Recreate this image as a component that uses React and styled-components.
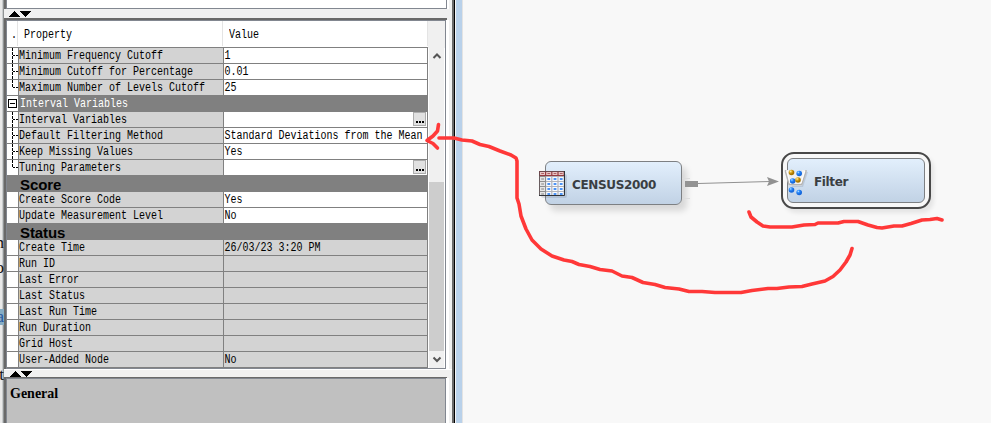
import React from "react";
import styled, { createGlobalStyle } from "styled-components";

const GlobalStyle = createGlobalStyle`
  * { box-sizing: border-box; }
  html, body { margin: 0; overflow: hidden; background: #f8f8f8; }
`;

const Screen = styled.div`
  position: relative;
  display: flex;
  width: 991px;
  height: 423px;
  overflow: hidden;
  background: #f8f8f8;
`;

const DocumentEdge = styled.div`
  position: relative;
  flex: none;
  width: 4px;
  height: 423px;
  overflow: hidden;
  background: linear-gradient(90deg, #e9e9e9 0 2px, #c9cccd 2px 3px, #909394 3px);
`;

const Fragment = styled.span`
  position: absolute;
  right: 0;
  top: ${(p) => p.$top}px;
  height: 16px;
  font: 17px/16px "Liberation Serif", serif;
  color: ${(p) => p.$color || "#111"};
  background: ${(p) => p.$bg || "transparent"};
`;

const Sidebar = styled.div`
  flex: none;
  width: 448px;
  height: 423px;
  display: flex;
  flex-direction: column;
  background: #696969;
`;

const PreviousPanel = styled.div`
  height: 9px;
  border: solid #828790;
  border-width: 0 1px 1px;
  width: 441px;
  background: #fff;
`;

const Strip = styled.div`
  display: flex;
  width: 448px;
  background: #f0f0f0;
`;

const Splitter = styled.div`
  flex: none;
  height: ${(p) => p.$height}px;
  padding: ${(p) => p.$pad};
  background: #f0f0f0;
  border-top: ${(p) => (p.$line ? "1px solid #fff" : "0")};
  svg { display: block; }
`;

const DarkLine = styled.div`
  flex: none;
  width: 443px;
  height: ${(p) => p.$height}px;
  background: #696969;
`;

const PanelRow = styled.div`
  flex: none;
  display: flex;
  height: ${(p) => p.$height}px;
  padding-left: 2px;
  background: linear-gradient(90deg, #696969 0 2px, #fff 2px 445px, #f0f0f0 445px);
`;

const Inspector = styled.div`
  display: flex;
  width: 440px;
  height: 349px;
  border: 1px solid #828790;
  background: #fff;
`;

const Table = styled.div`
  width: 421px;
`;

const Header = styled.div`
  display: grid;
  grid-template-columns: 11px 205px 205px;
  height: 27px;
  border-bottom: 1px solid #808080;
`;

const HeaderCell = styled.div`
  height: 25px;
  padding: 8px 0 0 ${(p) => p.$pad}px;
  border-right: 1px solid #e4e4e4;
`;

const Label = styled.span`
  display: block;
  width: max-content;
  height: 12px;
  font: 10px/12px "Liberation Mono", monospace;
  color: ${(p) => p.$color || "#000"};
  white-space: pre;
  transform: scaleY(1.25);
`;

const Row = styled.div`
  display: grid;
  grid-template-columns: 12px 205px 204px;
  height: 16px;
`;

const Tree = styled.div`
  height: 16px;
  border-right: 1px solid #808080;
  border-bottom: 1px solid #808080;
  background: #fff;
  svg { display: block; }
`;

const Cell = styled.div`
  display: flex;
  justify-content: space-between;
  height: 16px;
  padding: 0 0 0 ${(p) => p.$pad || 0}px;
  border-right: 1px solid #808080;
  border-bottom: 1px solid #808080;
  background: ${(p) => (p.$grey ? "#d3d3d3" : "#fff")};
  ${Label} { margin-top: 2px; }
`;

const SectionRow = styled.div`
  display: flex;
  height: 16px;
  background: #808080;
`;

const SectionTree = styled.div`
  width: 12px;
  height: 16px;
  background: ${(p) => (p.$open ? "#fff" : "#808080")};
  border: solid #808080;
  border-width: 0 1px 1px 0;
  svg { display: block; }
`;

const SectionTitle = styled.div`
  padding: 2px 0 0 1px;
`;

const Heading = styled.div`
  padding-left: 1px;
  font: bold 15px/18px "Liberation Sans", Arial, sans-serif;
  letter-spacing: -0.1px;
  color: #000;
`;

const MoreButton = styled.div`
  flex: none;
  display: flex;
  justify-content: center;
  align-items: flex-end;
  gap: 1px;
  width: 13px;
  height: 14px;
  margin: 0 1px 0 0;
  padding-bottom: 2px;
  border: 1px solid #adadad;
  background: #e1e1e1;
`;

const Dot = styled.i`
  width: 2px;
  height: 2px;
  background: #000;
`;

const Scrollbar = styled.div`
  display: flex;
  flex-direction: column;
  width: 17px;
  height: 347px;
  background: #f0f0f0;
  border: solid #fff;
  border-width: 0 1px;
  svg { display: block; flex: none; }
`;

const ScrollbarHeader = styled.div`
  flex: none;
  height: 27px;
  margin: 0 -1px;
  background: #f0f0f0;
`;

const Track = styled.div`
  flex: 1;
`;

const Thumb = styled.div`
  flex: none;
  height: 169px;
  background: #cdcdcd;
`;

const General = styled.div`
  width: 440px;
  height: 50px;
  padding: 6px 0 0 3px;
  border: 1px solid #828790;
  border-bottom: 0;
  background: #c0c0c0;
  font: bold 14px/17px "Liberation Serif", "Times New Roman", serif;
  color: #000;
`;

const WindowEdge = styled.div`
  flex: none;
  width: 11px;
  height: 423px;
  background: linear-gradient(90deg, #696969 0 2px, #000 2px 3px, #f4f4f4 3px 4px, #b9d1ea 4px 10px, #e3e3e3 10px);
`;

const Canvas = styled.div`
  flex: 1;
  background: #f8f8f8;
`;

const Overlay = styled.svg`
  position: absolute;
  inset: 0;
  pointer-events: none;
`;

const Node = styled.div`
  position: absolute;
  left: ${(p) => p.$x}px;
  top: ${(p) => p.$y}px;
  width: ${(p) => p.$w}px;
  height: ${(p) => p.$h}px;
  padding: 16px 0 0 26px;
  border: 1px solid #7d8083;
  border-radius: 6px;
  background: linear-gradient(#e2effc, #c1d2e5);
  box-shadow: ${(p) => (p.$selected ? "none" : "5px 6px 6px rgba(0,0,0,.13)")};
  font: bold 12px/15px "DejaVu Sans", sans-serif;
  letter-spacing: -0.35px;
  color: #3a3e42;
`;

const Selection = styled.div`
  position: absolute;
  left: 781px;
  top: 152px;
  width: 150px;
  height: 57px;
  border: 2.5px solid #484848;
  border-radius: 13px;
  background: #f8f8f8;
  box-shadow: 3px 4px 4px rgba(0,0,0,.08);
`;

const SplitArrows = () => (
  <svg width="26" height="6" shapeRendering="crispEdges">
    <path d="M0 6L6 0L12 6ZM11 0H23L17 6Z" />
  </svg>
);

const Branch = ({ last }) => (
  <svg width="11" height="15" shapeRendering="crispEdges">
    <path d={last ? "M5.5 0V8" : "M5.5 0V15"} stroke="#000" strokeDasharray="3 1" />
    <path d="M6 7.5H11" stroke="#000" strokeDasharray="2 1" />
  </svg>
);

const Collapse = () => (
  <svg width="11" height="15" shapeRendering="crispEdges">
    <path d="M1.5 3.5H9.5V11.5H1.5ZM3 7.5H8" fill="none" stroke="#000" />
  </svg>
);

const Chevron = ({ down }) => (
  <svg width="15" height="17">
    <path d={down ? "M4.5 6.5L8 10L11.5 6.5" : "M4.5 10L8 6.5L11.5 10"} fill="none" stroke="#555" strokeWidth="2" />
  </svg>
);

const rows = [
  { name: "Minimum Frequency Cutoff", value: "1", tree: "mid" },
  { name: "Minimum Cutoff for Percentage", value: "0.01", tree: "mid" },
  { name: "Maximum Number of Levels Cutoff", value: "25", tree: "end" },
  { group: "Interval Variables" },
  { name: "Interval Variables", more: true, tree: "mid" },
  { name: "Default Filtering Method", value: "Standard Deviations from the Mean", tree: "mid" },
  { name: "Keep Missing Values", value: "Yes", tree: "mid" },
  { name: "Tuning Parameters", more: true, tree: "end" },
  { heading: "Score" },
  { name: "Create Score Code", value: "Yes" },
  { name: "Update Measurement Level", value: "No" },
  { heading: "Status" },
  { name: "Create Time", value: "26/03/23 3:20 PM", locked: true },
  { name: "Run ID", locked: true },
  { name: "Last Error", locked: true },
  { name: "Last Status", locked: true },
  { name: "Last Run Time", locked: true },
  { name: "Run Duration", locked: true },
  { name: "Grid Host", locked: true },
  { name: "User-Added Node", value: "No", locked: true },
];

const PropertyRow = ({ row }) => {
  if (row.group) {
    return (
      <SectionRow>
        <SectionTree $open><Collapse /></SectionTree>
        <SectionTitle><Label $color="#fff">{row.group}</Label></SectionTitle>
      </SectionRow>
    );
  }
  if (row.heading) {
    return (
      <SectionRow>
        <SectionTree />
        <Heading>{row.heading}</Heading>
      </SectionRow>
    );
  }
  return (
    <Row>
      <Tree>{row.tree && <Branch last={row.tree === "end"} />}</Tree>
      <Cell $grey><Label>{row.name}</Label></Cell>
      <Cell $grey={row.locked} $pad={0.5}>
        <Label>{row.value || ""}</Label>
        {row.more && <MoreButton><Dot /><Dot /><Dot /></MoreButton>}
      </Cell>
    </Row>
  );
};

const tableCols = [0, 1, 2, 3];
const tableRows = [0, 1, 2, 3, 4];

const TableIcon = () => (
  <g>
    <rect x="541" y="174" width="26" height="24" rx="2" fill="#536173" opacity=".18" />
    <rect x="539" y="171" width="26" height="25" fill="#b2b3ba" />
    <rect x="539" y="171" width="26" height="5" fill="#963b40" />
    <rect x="539" y="176" width="7" height="19" fill="#8f8f8f" />
    {tableRows.map((r) => tableCols.map((c) => {
      const x = 540 + c * 6.2;
      const y = 172 + r * 5;
      const fill = r === 0 ? "#e6c6c6" : c === 0 ? "#e5e5e5" : "#f7fbff";
      const core = r === 0 ? "#b06065" : c === 0 ? "#b5b5b5" : "#4c93f5";
      return (
        <g key={`${r}-${c}`}>
          <rect x={x} y={y} width="5" height={r === 0 || r === 4 ? 3 : 4} fill={fill} />
          <rect x={x + 1.2} y={y + 1} width="2.8" height={r === 0 ? 1 : 2} fill={core} />
        </g>
      );
    }))}
    <path d="M539 195.5H564.5V171" fill="none" stroke="#303338" />
    <path d="M539.5 195V171.5H564" fill="none" stroke="#5c4d50" opacity=".75" />
  </g>
);

const balls = [
  [791.5, 172.5, "gold"], [799.2, 173.5, "blue"], [792.7, 181, "blue"],
  [798, 180, "gold"], [791.5, 190, "blue"], [799.2, 192.5, "blue"],
];

const FilterIcon = () => (
  <g>
    <path d="M788 172L792 187H803L808 172Z" fill="#65758a" opacity=".2" />
    <path d="M785 170H789V172H802V170H806.5V172L802 185.5H789L785 172Z" fill="#f0f0f0" />
    <path d="M785.5 170V172L789 184.5H801.8L806 172V170" fill="none" stroke="#b4b4b4" strokeWidth="1.4" />
    <path d="M787 171L790 183H801L804.5 171" fill="none" stroke="#fff" />
    {balls.map(([x, y, tone]) => (
      <circle key={`${x}-${y}`} cx={x} cy={y} r="2.8" fill={`url(#${tone})`} />
    ))}
  </g>
);

export default function App() {
  return (
    <>
      <GlobalStyle />
      <Screen>
        <DocumentEdge>
          <Fragment $top={235}>n</Fragment>
          <Fragment $top={260}>o</Fragment>
          <Fragment $top={309} $bg="#85acc4" $color="#2557a0">a</Fragment>
          <Fragment $top={367}>t</Fragment>
        </DocumentEdge>
        <Sidebar>
          <PanelRow $height={9}><PreviousPanel /></PanelRow>
          <Splitter $height={9} $pad="2px 0 0 4px"><SplitArrows /></Splitter>
          <Strip><DarkLine $height={2} /></Strip>
          <PanelRow $height={349}>
            <Inspector>
              <Table>
                <Header>
                  <HeaderCell $pad={4}><Label>.</Label></HeaderCell>
                  <HeaderCell $pad={6}><Label>Property</Label></HeaderCell>
                  <HeaderCell $pad={6}><Label>Value</Label></HeaderCell>
                </Header>
                {rows.map((row, i) => <PropertyRow key={i} row={row} />)}
              </Table>
              <Scrollbar>
                <ScrollbarHeader />
                <Chevron />
                <Track />
                <Thumb />
                <Chevron down />
              </Scrollbar>
            </Inspector>
          </PanelRow>
          <Splitter $height={8} $pad="1px 0 0 5px" $line><SplitArrows /></Splitter>
          <Strip><DarkLine $height={1} /></Strip>
          <PanelRow $height={45}><General>General</General></PanelRow>
        </Sidebar>
        <WindowEdge />
        <Canvas />

        <Node $x={545} $y={161} $w={137} $h={44}>CENSUS2000</Node>
        <Selection />
        <Node $selected $x={787} $y={158} $w={138} $h={45}>Filter</Node>

        <Overlay width="991" height="423" viewBox="0 0 991 423">
          <defs>
            <radialGradient id="blue" cx=".35" cy=".3">
              <stop offset="0" stopColor="#b9e3ff" />
              <stop offset=".45" stopColor="#2c8eff" />
              <stop offset="1" stopColor="#1769dc" />
            </radialGradient>
            <radialGradient id="gold" cx=".35" cy=".3">
              <stop offset="0" stopColor="#fff3b0" />
              <stop offset=".5" stopColor="#dda81d" />
              <stop offset="1" stopColor="#a87600" />
            </radialGradient>
          </defs>
          <path d="M682 178.5H690M682 198.5H690" stroke="#ddd" />
          <path d="M698 183.5L770 181.5" stroke="#919191" fill="none" />
          <rect x="685" y="181" width="13" height="6" fill="#939393" />
          <path d="M767 177L779 181.5L767 186L769 181.5Z" fill="#919191" />
          <TableIcon />
          <FilterIcon />
          <g fill="none" stroke="#ff3838" strokeWidth="3.6" strokeLinecap="round" strokeLinejoin="round">
            <path d="M438.5 124.5L437.5 131L433 136L427 140.5L433 143.5L437.5 148" />
            <path d="M439 138H454L462 140L472 141L480 144.5L489 146.5L500 151L511 155L516 158L517 161V198L519 204L521 216L526 229L532 240L541 249L552 256L564 260L572 261.5L579 264.5L590 266.5L600 269.5L612 271L622 276L632 277.5L643 282.5L655 284.5L665 287.5L679 289L689 291.5H702L715 292.5H741L752 290.5L768 288.5H777L789 287L802 286.5L812 284L825 281L833 276.5L840 270L846 262L850 255L852 248.5" />
            <path d="M749 212L751 217L757 222L763 226L770 227H792L804 225L815 224.5L818 223H838L844 221.5H858L868 225L877 227.5L882 228L894 226H902L911 223.5L922 220L930 219.5L937 218.5L942 220" />
          </g>
        </Overlay>
      </Screen>
    </>
  );
}
